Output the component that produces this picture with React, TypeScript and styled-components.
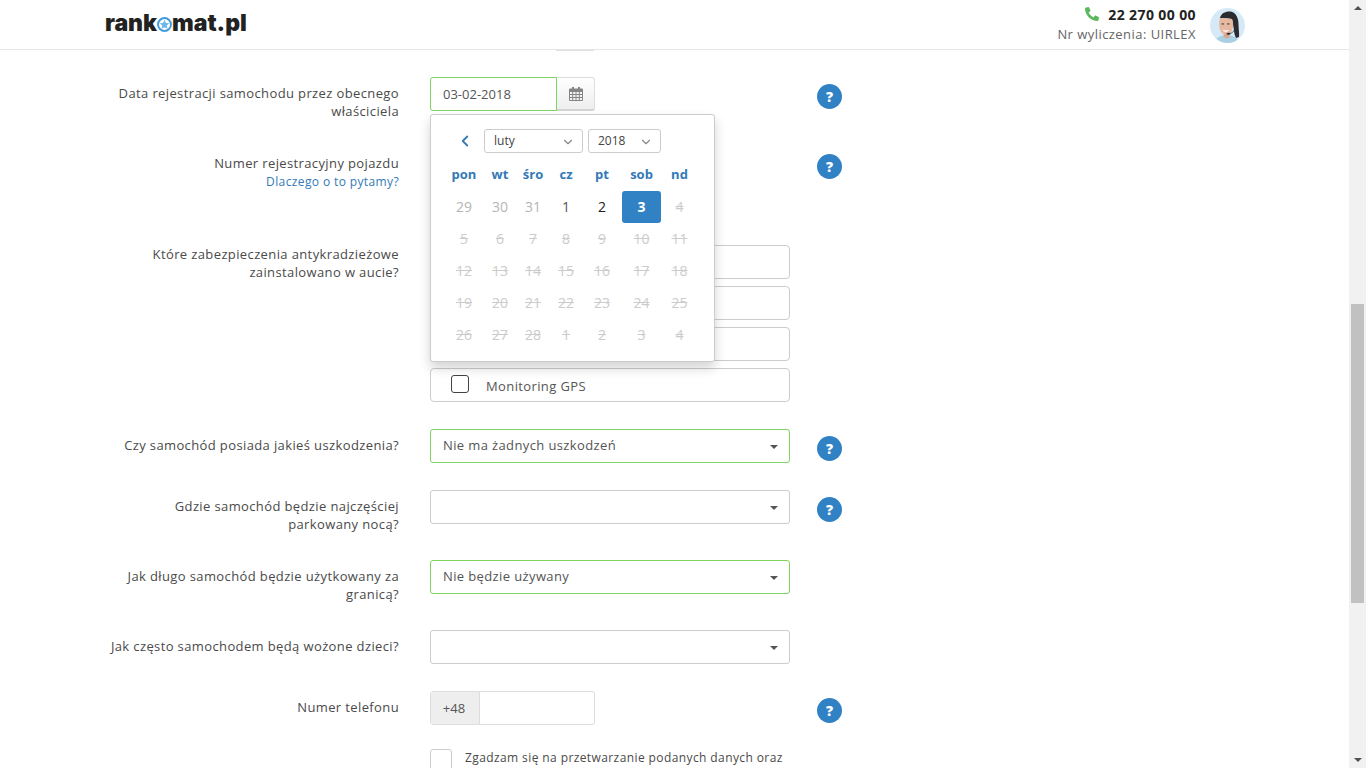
import React from 'react';
import styled, { createGlobalStyle } from 'styled-components';
import { FaPhoneAlt } from 'react-icons/fa';
import { ChevronDown, ChevronLeft } from 'lucide-react';

const GlobalStyle = createGlobalStyle`
  html, body {
    margin: 0;
    height: 100%;
    overflow: hidden;
    background: #fff;
  }
  body {
    font-family: "Open Sans", "Liberation Sans", sans-serif;
    font-size: 13px;
    color: #555;
  }
  * {
    box-sizing: border-box;
  }
`;

const Page = styled.div`
  display: flex;
  height: 768px;
  overflow: hidden;
`;

const Main = styled.div`
  width: 1349px;
  flex-shrink: 0;
`;

const Scrollbar = styled.div`
  width: 17px;
  background: #f1f1f1;
  display: flex;
  flex-direction: column;
  align-items: center;
  justify-content: space-between;
`;

const ScrollArrow = styled.div<{ down?: boolean }>`
  width: 0;
  height: 0;
  margin: 6px 0;
  border-left: 4px solid transparent;
  border-right: 4px solid transparent;
  ${props => props.down
    ? 'border-top: 4px solid #505050;'
    : 'border-bottom: 4px solid #505050;'}
`;

const ScrollTrack = styled.div`
  flex: 1;
  width: 100%;
  padding: 288px 2px 149px;
  display: flex;
`;

const ScrollThumb = styled.div`
  flex: 1;
  background: #c1c1c1;
`;

const Header = styled.header`
  height: 50px;
  border-bottom: 1px solid #e6e6e6;
  padding: 0 104px 0 105px;
  display: flex;
  align-items: center;
  justify-content: space-between;
`;

const Logo = styled.div`
  display: flex;
  align-items: center;
  font-family: Inter, "Liberation Sans", sans-serif;
  font-weight: 900;
  font-size: 23px;
  color: #222;
  margin-top: -4px;
`;

const LogoMark = styled.svg`
  width: 15px;
  height: 15px;
  margin: 3px 0 0;
`;

const Contact = styled.div`
  display: flex;
  align-items: center;
  gap: 14px;
  margin-top: 2px;
`;

const ContactText = styled.div`
  display: flex;
  flex-direction: column;
  align-items: flex-end;
`;

const PhoneLine = styled.div`
  display: flex;
  align-items: center;
  gap: 9px;
  font-size: 14px;
  font-weight: 700;
  letter-spacing: 0.4px;
  color: #222;
  line-height: 18px;
  margin-top: -1px;
`;

const PhoneIcon = styled(FaPhoneAlt)`
  color: #5cb85c;
  font-size: 14px;
  margin-top: -3px;
`;

const CalcNumber = styled.div`
  font-size: 13px;
  line-height: 20px;
  letter-spacing: 0.45px;
  color: #666;
`;

const Avatar = styled.svg`
  width: 35px;
  height: 35px;
  border-radius: 50%;
`;

const CalendarIcon = styled.svg`
  width: 14px;
  height: 14px;
  color: #858585;
`;

const Form = styled.div`
  padding-left: 109px;
`;

const PrevButtonEdge = styled.div`
  width: 38px;
  height: 1px;
  margin: 0 0 26px 447px;
  background: #e0e0e0;
`;

const Row = styled.div<{ gap?: number; minHeight?: number }>`
  display: grid;
  grid-template-columns: 290px 360px 25px;
  column-gap: 31px;
  margin-bottom: ${props => props.gap ?? 27}px;
  min-height: ${props => props.minHeight ?? 34}px;
`;

const LabelCell = styled.div`
  padding-top: 7px;
  text-align: right;
  line-height: 18px;
  letter-spacing: 0.38px;
  color: #4a4a4a;
`;

const WhyLink = styled.a`
  display: block;
  margin-top: 1px;
  font-size: 12px;
  color: #337ab7;
`;

const ControlCell = styled.div`
  position: relative;
  margin-right: -4px;
  width: 360px;
`;

const HelpButton = styled.div`
  width: 25px;
  height: 25px;
  margin-top: 7px;
  margin-left: -4px;
  border-radius: 50%;
  background: #3182c5;
  color: #fff;
  font-weight: 800;
  font-size: 14px;
  display: flex;
  align-items: center;
  justify-content: center;
`;

const DateGroup = styled.div`
  display: flex;
  width: 165px;
  height: 34px;
`;

const DateInput = styled.div`
  width: 127px;
  border: 1px solid #7ed45e;
  border-radius: 3px 0 0 3px;
  padding-left: 12px;
  line-height: 32px;
`;

const DateButton = styled.div`
  width: 38px;
  border: 1px solid #ddd;
  border-left: none;
  border-bottom: 2px solid #d5d5d5;
  border-radius: 0 3px 3px 0;
  background: linear-gradient(#fff, #eee);
  display: flex;
  align-items: center;
  justify-content: center;
`;

const Calendar = styled.div`
  position: absolute;
  top: 37px;
  left: 0;
  z-index: 2;
  width: 285px;
  height: 248px;
  background: #fff;
  border: 1px solid #ccc;
  border-radius: 3px;
  box-shadow: 0 6px 12px rgba(0, 0, 0, 0.175);
  padding: 14px 0 0 13px;
`;

const CalendarHead = styled.div`
  display: flex;
  align-items: center;
  height: 24px;
  color: #337ab7;
`;

const PrevMonth = styled(ChevronLeft)`
  width: 18px;
  height: 18px;
  margin: 0 10px 0 12px;
  stroke-width: 2.4;
`;

const MiniSelect = styled.div<{ width: number }>`
  width: ${props => props.width}px;
  height: 24px;
  margin-right: 5px;
  border: 1px solid #ccc;
  border-radius: 3px;
  padding: 0 7px 1px 9px;
  display: flex;
  align-items: center;
  justify-content: space-between;
  font-size: 12px;
  color: #444;
  svg {
    width: 14px;
    height: 14px;
    color: #888;
    margin-top: 2px;
  }
`;

const DayGrid = styled.div`
  display: grid;
  grid-template-columns: 40px 32px 34px 32px 40px 39px 37px;
  grid-auto-rows: 32px;
  margin-top: 6px;
  text-align: center;
`;

const WeekDay = styled.div`
  font-weight: 700;
  font-size: 13px;
  color: #337ab7;
  line-height: 32px;
  height: 27px;
  margin-top: -1px;
`;

const Day = styled.div<{ kind: 'prev' | 'open' | 'off' | 'selected'; dark?: boolean }>`
  line-height: 32px;
  font-size: 14px;
  border-radius: 3px;
  color: ${props => {
    if (props.kind === 'prev') return '#b5b5b5';
    if (props.kind === 'off') return '#ccc';
    if (props.kind === 'selected') return '#fff';
    return props.dark ? '#222' : '#555';
  }};
  background: ${props => (props.kind === 'selected' ? '#3182c5' : 'transparent')};
  font-weight: ${props => (props.kind === 'selected' ? 700 : 400)};
  text-decoration: ${props => (props.kind === 'off' ? 'line-through' : 'none')};
`;

const CheckList = styled.div`
  padding-top: 7px;
  display: flex;
  flex-direction: column;
  gap: 7px;
`;

const CheckRow = styled.div`
  height: 34px;
  border: 1px solid #ccc;
  border-radius: 4px;
  padding: 1px 0 0 20px;
  display: flex;
  align-items: center;
  gap: 17px;
  letter-spacing: 0.38px;
`;

const CheckBox = styled.div`
  width: 18px;
  height: 18px;
  border: 1px solid #444;
  border-radius: 3px;
  margin-top: -3px;
`;

const SelectBox = styled.div<{ valid?: boolean }>`
  height: 34px;
  border: 1px solid ${props => (props.valid ? '#7ed45e' : '#ccc')};
  border-radius: 3px;
  padding: 0 11px 2px 12px;
  display: flex;
  align-items: center;
  letter-spacing: 0.38px;
  &::after {
    content: '';
    margin-left: auto;
    border-left: 4px solid transparent;
    border-right: 4px solid transparent;
    border-top: 4px solid #555;
    margin-top: 4px;
  }
`;

const PhoneGroup = styled.div`
  width: 165px;
  height: 34px;
  border: 1px solid #ddd;
  border-radius: 3px;
  display: flex;
`;

const PhonePrefix = styled.div`
  width: 49px;
  padding-right: 2px;
  background: #eee;
  border-right: 1px solid #ddd;
  border-radius: 3px 0 0 3px;
  line-height: 32px;
  text-align: center;
`;

const ConsentRow = styled.div`
  display: flex;
  gap: 13px;
  margin-left: 321px;
`;

const ConsentBox = styled.div`
  width: 22px;
  height: 22px;
  flex-shrink: 0;
  border: 1px solid #ccc;
  border-radius: 3px;
`;

const ConsentText = styled.div`
  font-size: 12px;
  line-height: 18px;
  letter-spacing: 0.4px;
  color: #4a4a4a;
`;

const weekDays = ['pon', 'wt', 'śro', 'cz', 'pt', 'sob', 'nd'];

type DayItem = { n: number; kind: 'prev' | 'open' | 'off' | 'selected'; dark?: boolean };

const days: DayItem[] = [
  { n: 29, kind: 'prev' },
  { n: 30, kind: 'prev' },
  { n: 31, kind: 'prev' },
  { n: 1, kind: 'open' },
  { n: 2, kind: 'open', dark: true },
  { n: 3, kind: 'selected' },
  ...[4, 5, 6, 7, 8, 9, 10, 11, 12, 13, 14, 15, 16, 17, 18, 19, 20, 21, 22, 23, 24, 25, 26, 27, 28, 1, 2, 3, 4].map(
    (n): DayItem => ({ n, kind: 'off' })
  ),
];

const App: React.FC = () => {
  return (
    <Page>
      <GlobalStyle />
      <Main>
        <Header>
          <Logo>
            rank
            <LogoMark viewBox="0 0 20 20">
              <circle cx="10" cy="10" r="8.6" fill="none" stroke="#3f9bdc" strokeWidth="2.600" />
              <polygon
                points="10,3.600 11.900,8 16.400,8.400 13,11.400 14,15.800 10,13.500 6,15.800 7,11.400 3.600,8.400 8.100,8"
                fill="#6db7e8"
              />
            </LogoMark>
            mat.pl
          </Logo>
          <Contact>
            <ContactText>
              <PhoneLine>
                <PhoneIcon />
                22 270 00 00
              </PhoneLine>
              <CalcNumber>Nr wyliczenia: UIRLEX</CalcNumber>
            </ContactText>
            <Avatar viewBox="0 0 35 35">
              <rect width="35" height="35" fill="#d5eaf6" />
              <path d="M3 35c2-5 8-8 14-8s11 3 13 8z" fill="#a9cfe3" />
              <path d="M10 10C11 5 16 3 20.500 3.500 26 4.500 28.500 10 28.500 16c0 5 1 9 .5 13l-3 1c-1-2-2-5-2-8L22 11c-4-.5-8-1-12-1z" fill="#2b2a2f" />
              <path d="M10 10c4 0 8 .5 12 1 1.500 3 1.500 8 0 11.500-1 2.500-3 5-5.500 5-3 0-6-3-7-7.500-.5-3.500-.5-7 .5-10z" fill="#e6b8a0" />
              <path d="M14 26l5 0 1 3-3 1.500-3.500-1.500z" fill="#d9a68c" />
              <path d="M12.500 21.500c2 1.200 4.500 1.200 6.500.200-1 2.800-5 3-6.500-.200z" fill="#fff" />
              <rect x="11.500" y="15.500" width="2.600" height=".9" fill="#2b2a2f" />
              <rect x="17" y="15.500" width="2.600" height=".9" fill="#2b2a2f" />
              <path d="M24 22c-.5 2-2 3-4 3.500" fill="none" stroke="#2b2a2f" strokeWidth=".7" />
              <ellipse cx="18.500" cy="25.800" rx="2" ry="1" fill="#2b2a2f" />
            </Avatar>
          </Contact>
        </Header>
        <Form>
          <PrevButtonEdge />
          <Row>
            <LabelCell>Data rejestracji samochodu przez obecnego właściciela</LabelCell>
            <ControlCell>
              <DateGroup>
                <DateInput>03-02-2018</DateInput>
                <DateButton>
                  <CalendarIcon viewBox="0 0 14 14">
                    <path
                      fill="currentColor"
                      fillRule="evenodd"
                      d="M3 0h2v1.500h4V0h2v1.500h2a1 1 0 0 1 1 1V13a1 1 0 0 1-1 1H1a1 1 0 0 1-1-1V2.500a1 1 0 0 1 1-1h2zM1 5v2h2.200V5zm3.200 0v2h2.300V5zm3.300 0v2h2.300V5zm3.300 0v2H13V5zM1 8v2h2.200V8zm3.200 0v2h2.300V8zm3.300 0v2h2.300V8zm3.300 0v2H13V8zM1 11v2h2.200v-2zm3.200 0v2h2.300v-2zm3.300 0v2h2.300v-2zm3.300 0v2H13v-2z"
                    />
                  </CalendarIcon>
                </DateButton>
              </DateGroup>
              <Calendar>
                <CalendarHead>
                  <PrevMonth />
                  <MiniSelect width={99}>
                    luty
                    <ChevronDown />
                  </MiniSelect>
                  <MiniSelect width={73}>
                    2018
                    <ChevronDown />
                  </MiniSelect>
                </CalendarHead>
                <DayGrid>
                  {weekDays.map(d => (
                    <WeekDay key={d}>{d}</WeekDay>
                  ))}
                  {days.map((d, i) => (
                    <Day key={i} kind={d.kind} dark={d.dark}>
                      {d.n}
                    </Day>
                  ))}
                </DayGrid>
              </Calendar>
            </ControlCell>
            <HelpButton>?</HelpButton>
          </Row>
          <Row minHeight={64}>
            <LabelCell>
              Numer rejestracyjny pojazdu
              <WhyLink>Dlaczego o to pytamy?</WhyLink>
            </LabelCell>
            <ControlCell />
            <HelpButton>?</HelpButton>
          </Row>
          <Row>
            <LabelCell>Które zabezpieczenia antykradzieżowe zainstalowano w aucie?</LabelCell>
            <ControlCell>
              <CheckList>
                <CheckRow />
                <CheckRow />
                <CheckRow />
                <CheckRow>
                  <CheckBox />
                  Monitoring GPS
                </CheckRow>
              </CheckList>
            </ControlCell>
          </Row>
          <Row>
            <LabelCell>Czy samochód posiada jakieś uszkodzenia?</LabelCell>
            <ControlCell>
              <SelectBox valid>Nie ma żadnych uszkodzeń</SelectBox>
            </ControlCell>
            <HelpButton>?</HelpButton>
          </Row>
          <Row>
            <LabelCell>Gdzie samochód będzie najczęściej parkowany nocą?</LabelCell>
            <ControlCell>
              <SelectBox />
            </ControlCell>
            <HelpButton>?</HelpButton>
          </Row>
          <Row>
            <LabelCell>Jak długo samochód będzie użytkowany za granicą?</LabelCell>
            <ControlCell>
              <SelectBox valid>Nie będzie używany</SelectBox>
            </ControlCell>
          </Row>
          <Row>
            <LabelCell>Jak często samochodem będą wożone dzieci?</LabelCell>
            <ControlCell>
              <SelectBox />
            </ControlCell>
          </Row>
          <Row gap={24}>
            <LabelCell>Numer telefonu</LabelCell>
            <ControlCell>
              <PhoneGroup>
                <PhonePrefix>+48</PhonePrefix>
              </PhoneGroup>
            </ControlCell>
            <HelpButton>?</HelpButton>
          </Row>
          <ConsentRow>
            <ConsentBox />
            <ConsentText>Zgadzam się na przetwarzanie podanych danych oraz</ConsentText>
          </ConsentRow>
        </Form>
      </Main>
      <Scrollbar>
        <ScrollArrow />
        <ScrollTrack>
          <ScrollThumb />
        </ScrollTrack>
        <ScrollArrow down />
      </Scrollbar>
    </Page>
  );
};

export default App;
